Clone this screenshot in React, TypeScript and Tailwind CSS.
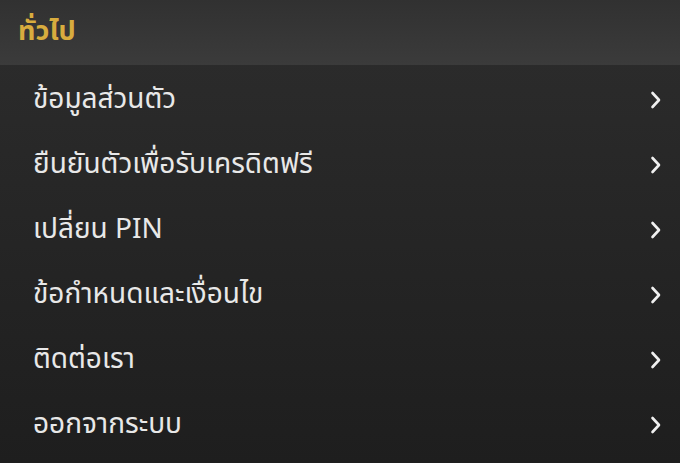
import React from "react";

const items = [
  "ข้อมูลส่วนตัว",
  "ยืนยันตัวเพื่อรับเครดิตฟรี",
  "เปลี่ยน PIN",
  "ข้อกำหนดและเงื่อนไข",
  "ติดต่อเรา",
  "ออกจากระบบ",
];

function Chevron() {
  return (
    <svg width="12" height="20" viewBox="0 0 12 20" fill="none" className="shrink-0">
      <path d="M2.5 3 L9 10 L2.5 17" stroke="#f0f0f0" strokeWidth="2.6" strokeLinecap="round" strokeLinejoin="round" />
    </svg>
  );
}

export default function App() {
  return (
    <div
      className="w-[680px] h-[463px] overflow-hidden flex flex-col bg-gradient-to-b from-[#2d2d2d] to-[#1e1e1e]"
      style={{ fontFamily: '"Noto Sans Thai", "Noto Sans Thai Looped", "Noto Sans", sans-serif' }}
    >
      {/* section header */}
      <div className="h-[65px] shrink-0 flex items-center px-[18px] pb-[2px] bg-gradient-to-b from-[#313131] to-[#3b3b3b]">
        <span className="text-[27px] font-bold text-[#d8ac3e] leading-none">ทั่วไป</span>
      </div>

      <ul className="flex flex-col pt-[2px]">
        {items.map((label) => (
          <li key={label} className="h-[65px] flex items-center justify-between pl-[33px] pr-[18px]">
            <span className="text-[28px] text-[#e8e8e8] leading-none">{label}</span>
            <Chevron />
          </li>
        ))}
      </ul>
    </div>
  );
}
